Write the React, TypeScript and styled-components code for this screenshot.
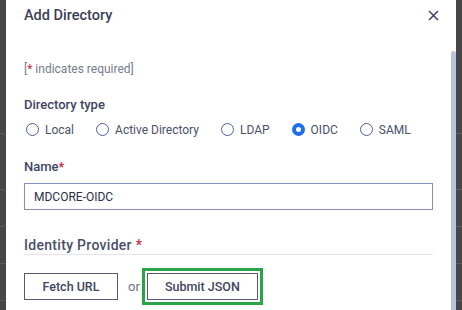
import styled, { createGlobalStyle } from 'styled-components';

const GlobalStyle = createGlobalStyle`
  body {
    margin: 0;
    background: #474747;
    font-family: Roboto, "Noto Sans", sans-serif;
    color: #3b3f58;
  }
`;

const Backdrop = styled.div`
  height: 310px;
  padding: 0 6px;
  display: flex;
  overflow: hidden;
  background:
    linear-gradient(#5a5a5a, #5a5a5a) 0 133px / 100% 1px no-repeat,
    linear-gradient(#5a5a5a, #5a5a5a) 0 189px / 100% 1px no-repeat,
    linear-gradient(#5a5a5a, #5a5a5a) 0 226px / 100% 1px no-repeat,
    linear-gradient(#5a5a5a, #5a5a5a) 0 263px / 100% 1px no-repeat,
    linear-gradient(#5a5a5a, #5a5a5a) 0 300px / 100% 1px no-repeat,
    #474747;
`;

const Modal = styled.div`
  flex: 1;
  background: #fff;
  display: flex;
`;

const Content = styled.div`
  flex: 1;
  display: flex;
  flex-direction: column;
`;

const Track = styled.div`
  width: 5px;
  padding-top: 51px;
  display: flex;
`;

const Thumb = styled.div`
  flex: 1;
  background: #b9c3dc;
  border-radius: 3px 3px 0 0;
`;

const Header = styled.div`
  height: 30px;
  padding: 0 12px 0 18px;
  display: flex;
  align-items: center;
  justify-content: space-between;
`;

const Title = styled.h2`
  margin: 0;
  font-size: 14.5px;
  font-weight: 500;
  color: #3b3f58;
`;

const CloseButton = styled.button`
  border: 0;
  padding: 0;
  background: none;
  display: flex;
  color: #3d4360;
  cursor: pointer;
`;

const Body = styled.div`
  padding: 31px 18px 0 18px;
  display: flex;
  flex-direction: column;
`;

const Hint = styled.div`
  font-size: 12px;
  line-height: 16px;
  color: #757b8c;
`;

const Star = styled.span`
  color: #d0283c;
`;

interface LabelProps {
  gap?: number;
}

const Label = styled.div<LabelProps>`
  margin-top: ${(p) => p.gap ?? 20}px;
  font-size: 13px;
  line-height: 16px;
  font-weight: 500;
  color: #40455f;
`;

const RadioRow = styled.div`
  margin-top: 8px;
  height: 17px;
  display: flex;
  align-items: center;
  gap: 22px;
  padding-left: 2px;
`;

const RadioOption = styled.label`
  display: flex;
  align-items: center;
  gap: 6px;
  font-size: 12px;
  color: #4a4f68;
`;

interface DotProps {
  checked?: boolean;
}

const Dot = styled.span<DotProps>`
  box-sizing: border-box;
  width: 13px;
  height: 13px;
  border-radius: 50%;
  border: ${(p) => (p.checked ? '4px solid #1f6ef0' : '1.3px solid #4d5f9c')};
  background: #fff;
`;

const Input = styled.input`
  margin-top: 8px;
  box-sizing: border-box;
  height: 27px;
  width: 100%;
  border: 1px solid #8590b8;
  padding: 0 9px;
  font-family: inherit;
  font-size: 12px;
  color: #2d2f4a;
  outline: none;
`;

const Section = styled.div`
  margin-top: 26px;
  font-size: 14px;
  line-height: 18px;
  font-weight: 500;
  letter-spacing: 0.3px;
  color: #4a4f68;
  border-bottom: 1px solid #e3e5ec;
`;

const Actions = styled.div`
  margin-top: 18px;
  display: flex;
  align-items: center;
`;

interface ButtonProps {
  $width: number;
  $focused?: boolean;
}

const Button = styled.button<ButtonProps>`
  box-sizing: border-box;
  width: ${(p) => p.$width}px;
  height: 27px;
  padding: 0;
  background: #fff;
  border: 1px solid #555b78;
  font-family: inherit;
  font-size: 12.5px;
  font-weight: 500;
  color: #40455f;
  white-space: nowrap;
  cursor: pointer;
  outline: ${(p) => (p.$focused ? '3px solid #29a448' : 'none')};
  outline-offset: 2px;
`;

const Or = styled.span`
  margin: 0 7px 0 10px;
  font-size: 13px;
  color: #6b7083;
`;

const types = ['Local', 'Active Directory', 'LDAP', 'OIDC', 'SAML'];

export default function App() {
  return (
    <>
      <GlobalStyle />
      <Backdrop>
        <Modal>
          <Content>
            <Header>
              <Title>Add Directory</Title>
              <CloseButton aria-label="Close">
                <svg width="11" height="11" viewBox="0 0 11 11">
                  <path d="M1 1L10 10M10 1L1 10" stroke="currentColor" strokeWidth="1.5" />
                </svg>
              </CloseButton>
            </Header>
            <Body>
              <Hint>
                [<Star>*</Star> indicates required]
              </Hint>
              <Label>Directory type</Label>
              <RadioRow>
                {types.map((t) => (
                  <RadioOption key={t}>
                    <Dot checked={t === 'OIDC'} />
                    {t}
                  </RadioOption>
                ))}
              </RadioRow>
              <Label gap={21}>
                Name<Star>*</Star>
              </Label>
              <Input defaultValue="MDCORE-OIDC" />
              <Section>
                Identity Provider <Star>*</Star>
              </Section>
              <Actions>
                <Button $width={94}>Fetch URL</Button>
                <Or>or</Or>
                <Button $width={111} $focused>
                  Submit JSON
                </Button>
              </Actions>
            </Body>
          </Content>
          <Track>
            <Thumb />
          </Track>
        </Modal>
      </Backdrop>
    </>
  );
}
